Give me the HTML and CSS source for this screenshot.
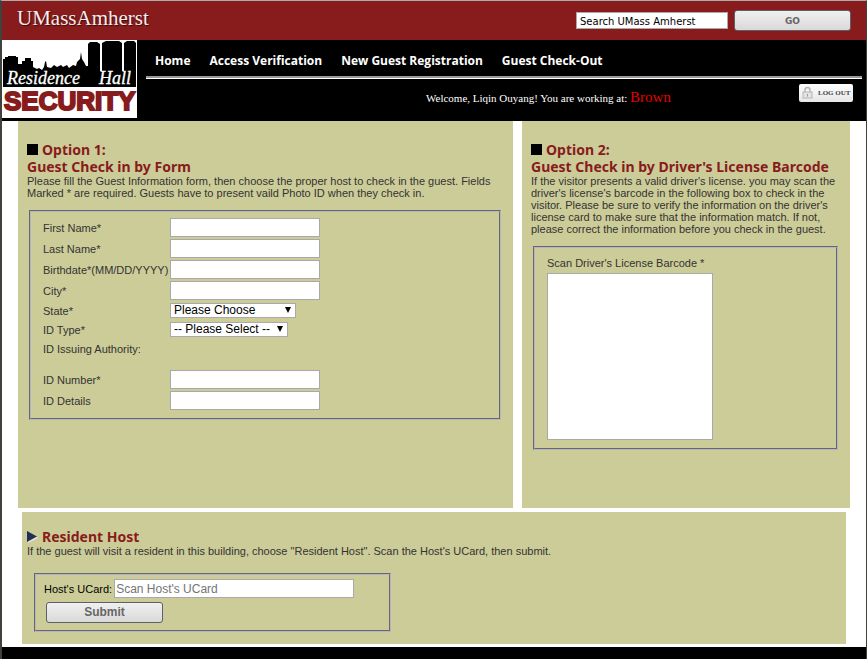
FILE: index.html
```html
<!DOCTYPE html>
<html lang="en">
<head>
<meta charset="utf-8">
<meta name="viewport" content="width=device-width, initial-scale=1">
<title>Residence Hall Security - Guest Check In</title>
<link rel="stylesheet" href="styles.css">
</head>
<body>
<div class="page">
  <header class="brandbar">
    <a class="brand" href="#">UMassAmherst</a>
    <form class="search">
      <input class="search-box" type="text" aria-label="Search" value="Search UMass Amherst">
      <button class="button go" type="button">GO</button>
    </form>
  </header>

  <div class="masthead">
    <svg class="logo" viewBox="0 0 135 78" role="img" aria-label="Residence Hall Security">
      <rect width="135" height="78" fill="#fff"/>
      <path d="M1 47V19H3V17H6V16H14V17H16V24H20V21H23V18H29V21H31V27L35 29L37 28L40 30L42 27L43 22L44 21L45 27L49 28L52 25L55 27L59 25L61 27L65 25L67 28L71 25L74 26L75 22L78 19L79 12L80 19L82 22L84 26H86V4L88 2H95L98 4V31H100V3L104 1H117L120 3V31H122V3L125 1H132L134 3V47Z" fill="#000"/>
      <text class="logo-script" x="5" y="44">Residence</text>
      <text class="logo-script" x="97" y="44">Hall</text>
      <text class="logo-name" x="2" y="70">SECURITY</text>
    </svg>
    <div class="masthead-main">
      <nav class="nav">
        <a href="#">Home</a>
        <a href="#">Access Verification</a>
        <a href="#">New Guest Registration</a>
        <a href="#">Guest Check-Out</a>
      </nav>
      <div class="status">
        <p class="welcome">Welcome, Liqin Ouyang! You are working at: <span class="building">Brown</span></p>
        <button class="logout" type="button">
          <svg class="lock" viewBox="0 0 12 14" aria-hidden="true">
            <path d="M3 6V4A2.500 2.500 0 0 1 8 4V6" fill="none" stroke="#b5b5b5" stroke-width="1.500"/>
            <rect x="1" y="6" width="9" height="6" fill="#e4e4e4" stroke="#b5b5b5"/>
            <path d="M5.500 8V10.500" stroke="#999"/>
          </svg>
          LOG OUT
        </button>
      </div>
    </div>
  </div>

  <main>
    <div class="options">
      <section class="panel">
        <h2><span class="square"></span>Option 1:</h2>
        <h2>Guest Check in by Form</h2>
        <p>Please fill the Guest Information form, then choose the proper host to check in the guest. Fields Marked * are required. Guests have to present vaild Photo ID when they check in.</p>
        <form class="box guest-form">
          <label for="first">First Name*</label><input id="first" type="text">
          <label for="last">Last Name*</label><input id="last" type="text">
          <label for="birth">Birthdate*(MM/DD/YYYY)</label><input id="birth" type="text">
          <label for="city">City*</label><input id="city" type="text">
          <label for="state">State*</label>
          <span class="select state"><select id="state"><option>Please Choose</option></select></span>
          <label for="idtype">ID Type*</label>
          <span class="select idtype"><select id="idtype"><option>-- Please Select --</option></select></span>
          <span class="authority">ID Issuing Authority:</span>
          <label for="idnum">ID Number*</label><input id="idnum" type="text">
          <label for="iddet">ID Details</label><input id="iddet" type="text">
        </form>
      </section>

      <section class="panel">
        <h2><span class="square"></span>Option 2:</h2>
        <h2>Guest Check in by Driver's License Barcode</h2>
        <p>If the visitor presents a valid driver's license. you may scan the driver's license's barcode in the following box to check in the visitor. Please be sure to verify the information on the driver's license card to make sure that the information match. If not, please correct the information before you check in the guest.</p>
        <form class="box barcode-form">
          <label for="barcode">Scan Driver's License Barcode *</label>
          <textarea id="barcode"></textarea>
        </form>
      </section>
    </div>

    <section class="host">
      <h2><svg class="arrow" viewBox="0 0 11 12" aria-hidden="true"><path d="M1 1L11 7L1 12Z" fill="#e6e6d8"/><path d="M0 0L10 5.500L0 11Z" fill="#1f2f55"/></svg>Resident Host</h2>
      <p>If the guest will visit a resident in this building, choose "Resident Host". Scan the Host's UCard, then submit.</p>
      <form class="box host-form">
        <div class="host-row"><label for="ucard">Host's UCard:</label><input id="ucard" type="text" placeholder="Scan Host's UCard"></div>
        <button class="button submit" type="button">Submit</button>
      </form>
    </section>
  </main>
  <footer class="footer"></footer>
</div>
</body>
</html>
```
FILE: styles.css
```css
* { box-sizing: border-box; }

body {
  margin: 0;
  background: #fff;
  color: #333;
  font: 11px/12px "Liberation Sans", Arial, sans-serif;
}

h2, p { margin: 0; }

.page {
  display: flex;
  flex-direction: column;
  min-height: 100vh;
  border: solid #42423d;
  border-width: 1px 1px 0 2px;
  border-top-color: #aaa;
}

.brandbar {
  display: flex;
  justify-content: space-between;
  height: 39px;
  padding: 0 15px;
  background: #881c1c;
}

.brand {
  padding-top: 5px;
  color: #f4eeee;
  font: 21px/24px "Liberation Serif", "Times New Roman", serif;
  text-decoration: none;
  text-shadow: 1px 1px 1px #3c0808;
}

.search {
  display: flex;
  align-items: flex-start;
  gap: 6px;
  padding-top: 9px;
}

input, textarea, select {
  margin: 0;
  border: 1px solid #a9a9a9;
  border-radius: 0;
  background: #fff;
  color: #000;
  font: 12px "Liberation Sans", Arial, sans-serif;
}

input { height: 19px; padding: 0 1px; }
input::placeholder { color: #757575; }

.search-box {
  width: 152px;
  height: 17px;
  margin-top: 2px;
  padding: 1px 3px 0;
  font: 10px "DejaVu Sans", Verdana, sans-serif;
}

.button {
  width: 117px;
  height: 21px;
  padding: 0;
  border: 1px solid #5d6068;
  border-radius: 3px;
  background: linear-gradient(#f1f0f1, #d9d9d9);
  color: #666;
}

.go { font: bold 9px "DejaVu Sans", Verdana, sans-serif; }

.masthead {
  display: flex;
  align-items: flex-start;
  height: 81px;
  background: #000;
}

.logo { flex: none; width: 135px; height: 78px; }

.logo-script {
  fill: #fff;
  stroke: #fff;
  stroke-width: 0.3px;
  font: italic 18px "Liberation Serif", "Times New Roman", serif;
}

.logo-name {
  fill: #881c1c;
  stroke: #881c1c;
  stroke-width: 2px;
  font: bold 26px "Liberation Sans", Arial, sans-serif;
}

.masthead-main { flex: 1; padding: 0 4px 0 9px; }

.nav {
  display: flex;
  gap: 19px;
  height: 38px;
  padding: 12px 9px 0;
  border-bottom: 2px solid #999;
  box-shadow: 0 1px #fff;
}

.nav a {
  color: #fff;
  font: bold 12px/18px "Open Sans", Verdana, sans-serif;
  text-decoration: none;
}

.status {
  display: flex;
  justify-content: space-between;
  padding: 6px 9px 0 280px;
}

.welcome {
  padding-top: 4px;
  color: #fff;
  font: 11px/18px "Liberation Serif", "Times New Roman", serif;
}

.building { color: #e60000; font-size: 15px; }

.logout {
  display: flex;
  align-items: center;
  gap: 4px;
  width: 54px;
  height: 18px;
  padding: 0 3px;
  border: 0;
  border-radius: 2px;
  background: linear-gradient(#fff, #e6e6e6);
  color: #444;
  font: bold 7px "Liberation Serif", "Times New Roman", serif;
  white-space: nowrap;
}

.lock { flex: none; width: 12px; height: 14px; }

.options {
  display: grid;
  grid-template-columns: 495fr 328fr;
  gap: 9px;
  padding: 0 16px;
}

.panel {
  min-height: 387px;
  padding: 20px 12px 57px 9px;
  background: #cc9;
}

h2 {
  display: flex;
  align-items: center;
  color: #881c1c;
  font: bold 14px/17px "Noto Sans", "Trebuchet MS", sans-serif;
}

.square { width: 11px; height: 11px; margin-right: 4px; background: #000; }

.box { border: 2px groove #b4b4c4; }

.guest-form {
  display: grid;
  grid-template-columns: 125px 1fr;
  align-items: center;
  justify-items: start;
  gap: 2px;
  margin: 11px 0 0 2px;
  padding: 6px 12px 8px;
}

.guest-form label { white-space: nowrap; }
.guest-form input { width: 150px; }

.select { position: relative; display: flex; height: 17px; align-items: center; }
.select::after {
  position: absolute;
  right: 5px;
  top: 5px;
  border: solid transparent;
  border-width: 6px 3px 0;
  border-top-color: #000;
  content: "";
  pointer-events: none;
}

select {
  appearance: none;
  width: 100%;
  height: 15px;
  padding: 0 3px;
  line-height: 13px;
}

.state { width: 126px; }
.idtype { width: 118px; }

.authority { grid-column: 1 / -1; height: 28px; padding-top: 3px; }

.barcode-form {
  display: flex;
  flex-direction: column;
  align-items: flex-start;
  gap: 4px;
  margin: 11px 0 0 2px;
  padding: 9px 12px 8px;
}

textarea { width: 166px; height: 167px; resize: none; }

.host {
  margin: 4px 20px 3px;
  padding: 16px 5px 12px;
  background: #cc9;
}

.arrow { width: 11px; height: 12px; margin-right: 4px; }

.host-form {
  width: 357px;
  margin: 16px 0 0 7px;
  padding: 4px 8px 7px;
}

.host-row { display: flex; align-items: center; gap: 2px; margin-bottom: 4px; color: #000; }
.host-row input { width: 240px; }

.submit { display: block; margin-left: 2px; padding-bottom: 2px; font: bold 12px "Liberation Sans", Arial, sans-serif; }

.footer { flex: 1; min-height: 12px; background: #000; }
```
